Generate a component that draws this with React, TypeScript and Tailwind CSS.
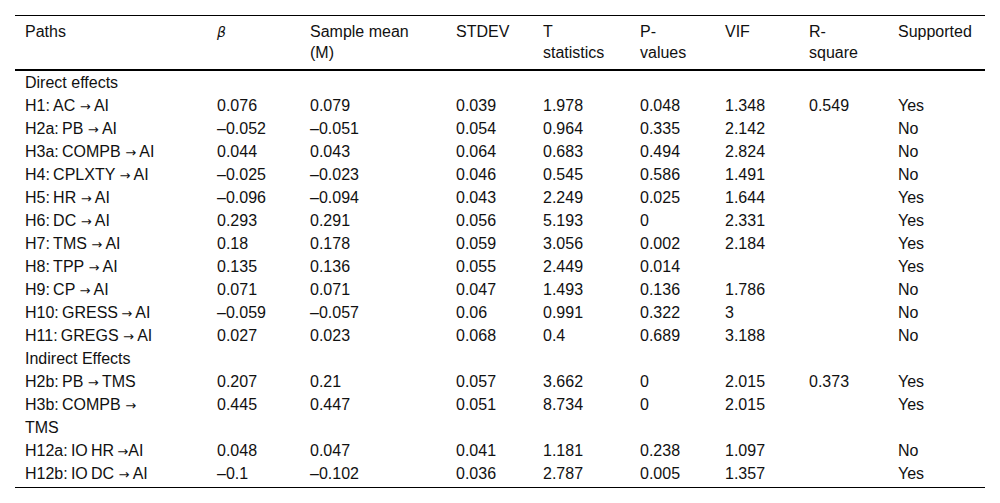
const head = [
  { w: 'w-[192px]', label: <>Paths</> },
  { w: 'w-[93px]', label: <i className="font-['DejaVu_Sans',sans-serif] text-[14px]">β</i> },
  { w: 'w-[146px]', label: <>Sample mean<br />(M)</> },
  { w: 'w-[87px]', label: <>STDEV</> },
  { w: 'w-[97px]', label: <>T<br />statistics</> },
  { w: 'w-[85px]', label: <>P-<br />values</> },
  { w: 'w-[84px]', label: <>VIF</> },
  { w: 'w-[89px]', label: <>R-<br />square</> },
  { w: 'w-[97px]', label: <>Supported</> },
];

const Arrow = () => <span className="text-[13px] leading-none font-['DejaVu_Sans',sans-serif]">→</span>;

type Row = { section?: string; path?: React.ReactNode; v?: string[] };

const rows: Row[] = [
  { section: 'Direct effects' },
  { path: <>H1:&#8201;AC <Arrow />&#8201;AI</>, v: ['0.076', '0.079', '0.039', '1.978', '0.048', '1.348', '0.549', 'Yes'] },
  { path: <>H2a:&#8201;PB <Arrow />&#8201;AI</>, v: ['–0.052', '–0.051', '0.054', '0.964', '0.335', '2.142', '', 'No'] },
  { path: <>H3a:&#8201;COMPB <Arrow />&#8201;AI</>, v: ['0.044', '0.043', '0.064', '0.683', '0.494', '2.824', '', 'No'] },
  { path: <>H4:&#8201;CPLXTY <Arrow />&#8201;AI</>, v: ['–0.025', '–0.023', '0.046', '0.545', '0.586', '1.491', '', 'No'] },
  { path: <>H5:&#8201;HR <Arrow />&#8201;AI</>, v: ['–0.096', '–0.094', '0.043', '2.249', '0.025', '1.644', '', 'Yes'] },
  { path: <>H6:&#8201;DC <Arrow />&#8201;AI</>, v: ['0.293', '0.291', '0.056', '5.193', '0', '2.331', '', 'Yes'] },
  { path: <>H7:&#8201;TMS <Arrow />&#8201;AI</>, v: ['0.18', '0.178', '0.059', '3.056', '0.002', '2.184', '', 'Yes'] },
  { path: <>H8:&#8201;TPP <Arrow />&#8201;AI</>, v: ['0.135', '0.136', '0.055', '2.449', '0.014', '', '', 'Yes'] },
  { path: <>H9:&#8201;CP <Arrow />&#8201;AI</>, v: ['0.071', '0.071', '0.047', '1.493', '0.136', '1.786', '', 'No'] },
  { path: <>H10:&#8201;GRESS&#8201;<Arrow />&#8201;AI</>, v: ['–0.059', '–0.057', '0.06', '0.991', '0.322', '3', '', 'No'] },
  { path: <>H11:&#8201;GREGS <Arrow />&#8201;AI</>, v: ['0.027', '0.023', '0.068', '0.4', '0.689', '3.188', '', 'No'] },
  { section: 'Indirect Effects' },
  { path: <>H2b:&#8201;PB <Arrow />&#8201;TMS</>, v: ['0.207', '0.21', '0.057', '3.662', '0', '2.015', '0.373', 'Yes'] },
  { path: <>H3b:&#8201;COMPB <Arrow /><br />TMS</>, v: ['0.445', '0.447', '0.051', '8.734', '0', '2.015', '', 'Yes'] },
  { path: <>H12a:&#8201;IO&#8201;HR&#8201;<Arrow />AI</>, v: ['0.048', '0.047', '0.041', '1.181', '0.238', '1.097', '', 'No'] },
  { path: <>H12b:&#8201;IO&#8201;DC <Arrow />&#8201;AI</>, v: ['–0.1', '–0.102', '0.036', '2.787', '0.005', '1.357', '', 'Yes'] },
];

export default function App() {
  return (
    <div className="w-[1000px] h-[503px] bg-white px-[15px] pt-[15px] font-['Liberation_Sans',Arial,sans-serif] text-[16px] text-[#111]">
      <table className="w-[970px] table-fixed border-collapse">
        <thead>
          <tr className="border-t border-b-2 border-black">
            {head.map((h, i) => (
              <th
                key={i}
                className={`${h.w} text-left font-normal align-top leading-[21px] pl-[10px] pt-[5px] pb-[6px]`}
              >
                {h.label}
              </th>
            ))}
          </tr>
        </thead>
        <tbody className="border-b border-black">
          {rows.map((r, i) =>
            r.section ? (
              <tr key={i}>
                <td colSpan={9} className="pl-[10px] p-0 leading-[23px]">
                  {r.section}
                </td>
              </tr>
            ) : (
              <tr key={i} className={i === rows.length - 1 ? 'h-[25px] align-top' : 'align-top'}>
                <td className="pl-[10px] leading-[23px] whitespace-nowrap">{r.path}</td>
                {r.v!.map((c, j) => (
                  <td key={j} className="pl-[10px] leading-[23px]">
                    {c}
                  </td>
                ))}
              </tr>
            )
          )}
        </tbody>
      </table>
    </div>
  );
}
